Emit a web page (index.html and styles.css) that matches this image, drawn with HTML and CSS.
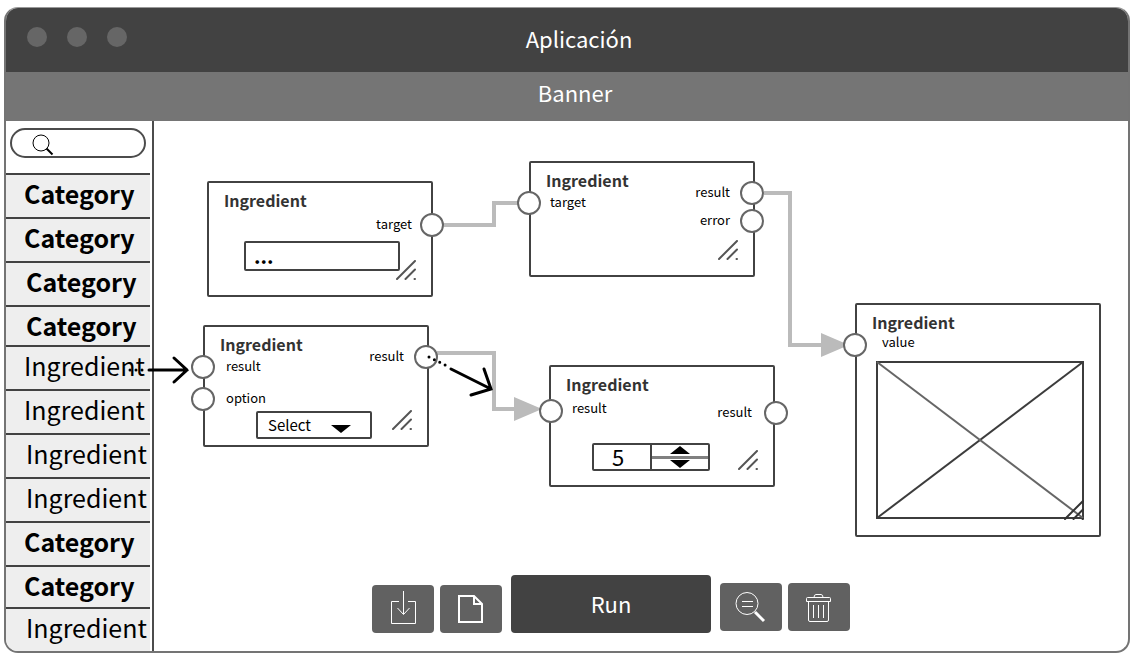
FILE: index.html
```html
<!DOCTYPE html>
<html lang="es">
<head>
<meta charset="utf-8">
<title>Aplicación</title>
<link rel="stylesheet" href="styles.css">
</head>
<body>
<svg class="defs" aria-hidden="true">
  <symbol id="grip" viewBox="0 0 20 20"><path d="M1 19 19 1M9.500 19 19 9.500M18.500 19h.5"/></symbol>
</svg>
<div class="window">
  <header class="titlebar">
    <div class="dots"><span class="dot"></span><span class="dot"></span><span class="dot"></span></div>
    <h1 class="app-title">Aplicación</h1>
  </header>
  <div class="banner">Banner</div>
  <div class="body">
    <aside class="sidebar">
      <div class="search">
        <svg class="search-icon" viewBox="0 0 22 22" aria-hidden="true"><circle cx="9" cy="9" r="8"/><path class="handle" d="m14.500 14.500 6 6"/></svg>
        <input class="search-input" type="search" aria-label="Buscar">
      </div>
      <nav class="list">
        <button class="row category">Category</button>
        <button class="row category">Category</button>
        <button class="row category inset">Category</button>
        <button class="row category inset short">Category</button>
        <button class="row">Ingredient</button>
        <button class="row">Ingredient</button>
        <button class="row inset">Ingredient</button>
        <button class="row inset">Ingredient</button>
        <button class="row category">Category</button>
        <button class="row category medium">Category</button>
        <button class="row inset last">Ingredient</button>
      </nav>
    </aside>
    <main class="canvas">
      <svg class="layer" aria-hidden="true">
        <g class="links" transform="translate(-154 -121)">
          <path d="M444 225H494V203H518"/>
          <path d="M764 193H790V345H822"/>
          <path d="M437 353H494V409H514"/>
          <path class="tip" d="M821 333 849 345 821 357zM514 397 542 409 514 421z"/>
        </g>
      </svg>

      <section class="node n1">
        <h2 class="node-title">Ingredient</h2>
        <div class="port out p-target"><span class="label">target</span><span class="ring"></span></div>
        <input class="text-field" type="text" value="..." aria-label="target">
        <svg class="grip" aria-hidden="true"><use href="#grip"/></svg>
      </section>

      <section class="node n2">
        <h2 class="node-title">Ingredient</h2>
        <div class="port in p-target"><span class="ring"></span><span class="label">target</span></div>
        <div class="port out p-result"><span class="label">result</span><span class="ring"></span></div>
        <div class="port out p-error"><span class="label">error</span><span class="ring"></span></div>
        <svg class="grip" aria-hidden="true"><use href="#grip"/></svg>
      </section>

      <section class="node n3">
        <h2 class="node-title">Ingredient</h2>
        <div class="port in p-source"><span class="ring"></span><span class="label">result</span></div>
        <div class="port in p-option"><span class="ring"></span><span class="label">option</span></div>
        <div class="port out p-result"><span class="label">result</span><span class="ring"></span></div>
        <div class="select-box">
          <select class="select" aria-label="option"><option>Select</option></select>
          <svg class="caret" viewBox="0 0 20 8" aria-hidden="true"><path d="M0 0H20L10 8z"/></svg>
        </div>
        <svg class="grip" aria-hidden="true"><use href="#grip"/></svg>
      </section>

      <section class="node n4">
        <h2 class="node-title">Ingredient</h2>
        <div class="port in high p-source"><span class="ring"></span><span class="label">result</span></div>
        <div class="port out p-result"><span class="label">result</span><span class="ring"></span></div>
        <div class="stepper">
          <input class="number" type="number" value="5" aria-label="result">
          <div class="steps">
            <button class="step" aria-label="Más"><svg viewBox="0 0 20 8" aria-hidden="true"><path d="M0 8H20L10 0z"/></svg></button>
            <button class="step" aria-label="Menos"><svg viewBox="0 0 20 8" aria-hidden="true"><path d="M0 0H20L10 8z"/></svg></button>
          </div>
        </div>
        <svg class="grip" aria-hidden="true"><use href="#grip"/></svg>
      </section>

      <section class="node n5">
        <h2 class="node-title">Ingredient</h2>
        <div class="port in high p-value"><span class="ring"></span><span class="label">value</span></div>
        <svg class="picture" viewBox="0 0 208 158" role="img" aria-label="value">
          <rect x="1" y="1" width="206" height="156"/>
          <path d="M1 157 207 1"/><path class="soft" d="M1 1 207 157"/>
        </svg>
        <svg class="grip dark" aria-hidden="true"><use href="#grip"/></svg>
      </section>

      <svg class="layer" aria-hidden="true">
        <g class="arrows" transform="translate(-154 -121)">
          <path d="M149 370H187M174 358 187 370 174 382"/>
          <path class="dotted" d="M130 370H146"/>
          <path d="M451 369 491 389M484 369 491 389 471 395"/>
          <path class="dotted" d="M429 357 447 366"/>
        </g>
      </svg>

      <div class="toolbar">
        <div class="tools">
          <button class="tool" aria-label="Importar"><svg viewBox="0 0 32 36" aria-hidden="true"><path d="M12 10.500H4.500V32.500H28.500V10.500H21M16.500 0V23M10.500 17 16.500 23.500 22.500 17"/></svg></button>
          <button class="tool" aria-label="Nuevo"><svg viewBox="0 0 32 36" aria-hidden="true"><path class="bold" d="M4 5H19L27 13V31H4zM19 5V13H27"/></svg></button>
        </div>
        <button class="run">Run</button>
        <div class="tools raised">
          <button class="tool" aria-label="Buscar en el lienzo"><svg viewBox="0 0 32 36" aria-hidden="true"><circle cx="12" cy="14.500" r="11"/><path d="M7 12.500H18M7 17.500H18"/><path class="heavy" d="M20 23 29 32"/></svg></button>
          <button class="tool" aria-label="Eliminar"><svg viewBox="0 0 32 36" aria-hidden="true"><path d="M5.500 12.500V31Q5.500 32.500 7 32.500H24Q25.500 32.500 25.500 31V12.500M3.500 9.500Q3.500 8.500 4.500 8.500H26.500Q27.500 8.500 27.500 9.500V12.500H3.500zM11 8.500Q11 5.500 13 5.500H18Q20 5.500 20 8.500M10.500 16V29M15.500 16V29M20.500 16V29"/></svg></button>
        </div>
      </div>
    </main>
  </div>
</div>
</body>
</html>
```
FILE: styles.css
```css
* { box-sizing: border-box; }

body {
  margin: 0;
  background: #fff;
  color: #000;
  font-family: "Noto Sans CJK SC", "Noto Sans", sans-serif;
}

button, input, select { font: inherit; color: inherit; }
button { cursor: pointer; }

.defs { position: absolute; width: 0; height: 0; }

.window {
  display: flex;
  flex-direction: column;
  min-height: calc(100vh - 10px);
  margin: 7px 2px 3px 4px;
  border: 2px solid #747474;
  border-top: 1px solid #999;
  border-radius: 14px;
  overflow: hidden;
}

.titlebar {
  display: grid;
  grid-template-columns: 1fr auto 1fr;
  align-items: center;
  height: 64px;
  padding: 0 21px;
  background: #424242;
  color: #fff;
}

.dots { display: flex; gap: 20px; padding-bottom: 6px; }
.dot { width: 20px; height: 20px; border-radius: 50%; background: #666; }
.app-title { margin: 0; padding: 0 0 4px 24px; font-size: 22px; font-weight: 400; line-height: 32px; }

.banner {
  height: 49px;
  padding-left: 16px;
  background: #757575;
  color: #fff;
  font-size: 22px;
  line-height: 40px;
  text-align: center;
}

.body { display: flex; flex: 1; }

/* Sidebar */
.sidebar {
  display: flex;
  flex-direction: column;
  flex: 0 0 148px;
  border-right: 2px solid #4c4c4c;
}

.search {
  display: flex;
  align-items: center;
  height: 30px;
  margin: 7px 6px 15px 4px;
  padding-left: 20px;
  border: 2px solid #4c4c4c;
  border-radius: 15px;
}
.search-icon { flex: none; width: 22px; height: 22px; margin-top: 4px; fill: none; stroke: #000; }
.search-icon .handle { stroke-width: 2; }
.search-input { width: 100%; min-width: 0; border: 0; outline: 0; background: none; font-size: 16px; }

.list { display: flex; flex-direction: column; flex: 1; padding-right: 2px; }
.row {
  display: flex;
  flex: 0 0 44px;
  align-items: flex-start;
  padding: 0 0 0 18px;
  border: 0;
  border-top: 2px solid #424242;
  background: #eee;
  font-size: 25px;
  line-height: 36px;
  white-space: nowrap;
}
.category { font-weight: 700; }
.inset { padding-left: 20px; }
.short { flex-basis: 40px; }
.medium { flex-basis: 42px; }
.last { flex: 1 0 38px; }

/* Canvas */
.canvas {
  position: relative;
  display: flex;
  flex: 1;
  flex-direction: column;
  justify-content: flex-end;
}
.layer {
  position: absolute;
  inset: 0;
  width: 100%;
  height: 100%;
  overflow: visible;
  pointer-events: none;
  fill: none;
}
.links { stroke: #bbb; stroke-width: 4; }
.links .tip { fill: #bbb; stroke: none; }
.arrows { stroke: #000; stroke-width: 3; stroke-linecap: round; }
.arrows .dotted { stroke-dasharray: 0 6; }

.node {
  position: absolute;
  width: 226px;
  padding: 5px 15px;
  border: 2px solid #424242;
  border-radius: 2px;
  background: #fff;
}
.n1 { left: 53px; top: 60px; min-height: 116px; }
.n2 { left: 375px; top: 40px; min-height: 116px; }
.n3 { left: 49px; top: 204px; min-height: 122px; }
.n4 { left: 395px; top: 244px; min-height: 122px; }
.n5 { left: 701px; top: 182px; width: 246px; min-height: 234px; }

.node-title { margin: 0; color: #333; font-size: 16px; font-weight: 700; line-height: 24px; }

.port { position: absolute; display: flex; align-items: center; gap: 9px; font-size: 13px; line-height: 18px; }
.port.high { align-items: flex-start; }
.label { padding-bottom: 2px; }
.in { left: -14px; }
.out { right: -13px; }
.ring { width: 24px; height: 24px; border: 2px solid #666; border-radius: 50%; background: #fff; }
.n1 .p-target { top: 30px; gap: 8px; }
.n2 .p-target { top: 28px; }
.n2 .p-result { top: 18px; right: -11px; gap: 10px; }
.n2 .p-error { top: 46px; right: -11px; gap: 10px; }
.n3 .p-source { top: 28px; gap: 11px; }
.n3 .p-option { top: 60px; gap: 11px; }
.n3 .p-result { top: 18px; right: -11px; gap: 10px; }
.n4 .p-source { top: 32px; left: -12px; }
.n4 .p-result { top: 34px; gap: 12px; right: -15px; }
.n5 .p-value { top: 28px; gap: 15px; }

.text-field {
  display: block;
  width: 156px;
  height: 30px;
  margin: 29px 0 0 20px;
  padding: 0 8px 2px;
  border: 2px solid #424242;
  border-radius: 2px;
  background: #fff;
  font-size: 20px;
  font-weight: 700;
}

.select-box { position: relative; width: 116px; margin: 55px 0 0 36px; }
.select {
  display: block;
  width: 100%;
  height: 28px;
  padding: 0 10px 2px;
  appearance: none;
  border: 2px solid #424242;
  border-radius: 2px;
  background: #fff;
  font-size: 15px;
}
.caret { position: absolute; right: 21px; bottom: 6px; width: 20px; height: 8px; pointer-events: none; }

.stepper {
  display: flex;
  width: 118px;
  height: 28px;
  margin: 47px 0 0 26px;
  border: 2px solid #424242;
  border-radius: 2px;
}
.number {
  width: 58px;
  padding: 0 8px 2px 0;
  appearance: textfield;
  border: 0;
  border-right: 2px solid #424242;
  background: none;
  font-size: 22px;
  text-align: center;
}
.number::-webkit-inner-spin-button { appearance: none; }
.steps { display: flex; flex: 1; flex-direction: column; }
.step { display: flex; flex: 1; align-items: center; justify-content: center; padding: 0; border: 0; background: none; }
.step + .step { border-top: 3px solid #808080; }
.step svg { width: 20px; height: 8px; }

.picture { display: block; width: 208px; height: 158px; margin: 27px 0 0 4px; fill: none; stroke: #3c3c3c; stroke-width: 2; }
.picture .soft { stroke: #666; }

.grip { position: absolute; right: 15px; bottom: 15px; width: 20px; height: 20px; fill: none; stroke: #555; stroke-width: 2; stroke-linecap: round; }
.grip.dark { stroke: #333; }

/* Toolbar */
.toolbar {
  display: flex;
  align-items: flex-end;
  justify-content: center;
  gap: 9px;
  padding: 0 60px 18px 0;
}
.tools { display: flex; gap: 6px; }
.raised { padding-bottom: 2px; }
.tool {
  display: flex;
  align-items: center;
  justify-content: center;
  width: 62px;
  height: 48px;
  padding: 0;
  border: 0;
  border-radius: 4px;
  background: #616161;
}
.tool svg { width: 32px; height: 36px; fill: none; stroke: #fff; stroke-width: 1; }
.tool .bold { stroke-width: 2; }
.tool .heavy { stroke-width: 3; }
.run { width: 200px; height: 58px; padding: 0 0 2px; border: 0; border-radius: 4px; background: #424242; color: #fff; font-size: 22px; }
```
